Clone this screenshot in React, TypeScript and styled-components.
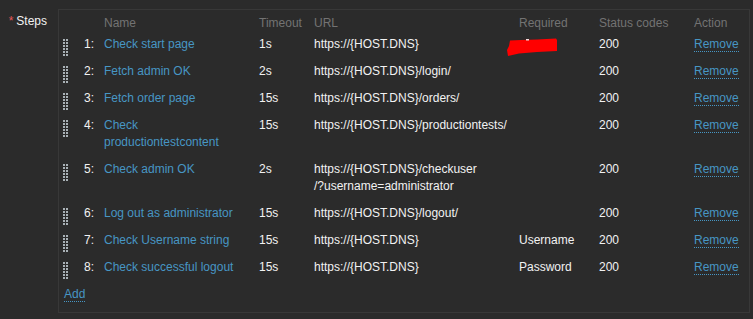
import React from 'react';
import styled, { createGlobalStyle } from 'styled-components';

const GlobalStyle = createGlobalStyle`
  body {
    margin: 0;
    background: #2b2b2b;
    font-family: "Liberation Sans", Arial, sans-serif;
    font-size: 12px;
    color: #f2f2f2;
  }
`;

const COLS = '20px 20px 155px 55px 205px 80px 95px 1fr';

const FormRow = styled.div`
  display: grid;
  grid-template-columns: 50px 692px;
  column-gap: 8px;
  padding-top: 9px;
`;

const Label = styled.div`
  text-align: right;
  padding: 4px 3px 0 0;
  line-height: 17px;
`;

const Asterisk = styled.span`
  color: #e45959;
  margin-right: 3px;
`;

const Box = styled.div`
  border: 1px solid #383838;
  height: 302px;
`;

const Row = styled.div<{ $head?: boolean }>`
  display: grid;
  grid-template-columns: ${COLS};
  color: ${(p) => (p.$head ? '#737373' : '#f2f2f2')};
`;

const Cell = styled.div<{ $head?: boolean; $right?: boolean }>`
  position: relative;
  padding: ${(p) => (p.$head ? '5px 5px 0' : '5px 5px')};
  line-height: ${(p) => (p.$head ? '16px' : '17px')};
  text-align: ${(p) => (p.$right ? 'right' : 'left')};
`;

const HandleCell = styled.div`
  padding: 8px 0 0 4px;
  line-height: 0;

  svg {
    display: block;
  }
`;

const Link = styled.a`
  color: #4796c4;
  text-decoration: none;
  cursor: pointer;
`;

const DottedLink = styled(Link)`
  border-bottom: 1px dotted #4796c4;
`;

const FootRow = styled.div`
  padding: 5px 5px;
  line-height: 17px;
`;

// red scribble that hides the value in the first row
const Redaction = styled.svg`
  position: absolute;
  left: -7px;
  top: 7px;
`;

const DragHandle = () => (
  <svg width="5" height="18" viewBox="0 0 5 18">
    {[0, 3, 6, 9, 12, 15].map((y) =>
      [0, 3].map((x) => (
        <rect key={`${x}-${y}`} x={x} y={y} width="2" height="2" fill="#a9b1b6" />
      ))
    )}
  </svg>
);

type Step = {
  name: string;
  timeout: string;
  url: string[];
  required?: string;
  redacted?: boolean;
};

const steps: Step[] = [
  { name: 'Check start page', timeout: '1s', url: ['https://{HOST.DNS}'], redacted: true },
  { name: 'Fetch admin OK', timeout: '2s', url: ['https://{HOST.DNS}/login/'] },
  { name: 'Fetch order page', timeout: '15s', url: ['https://{HOST.DNS}/orders/'] },
  { name: 'Check productiontestcontent', timeout: '15s', url: ['https://{HOST.DNS}/productiontests/'] },
  {
    name: 'Check admin OK',
    timeout: '2s',
    url: ['https://{HOST.DNS}/checkuser', '/?username=administrator'],
  },
  { name: 'Log out as administrator', timeout: '15s', url: ['https://{HOST.DNS}/logout/'] },
  { name: 'Check Username string', timeout: '15s', url: ['https://{HOST.DNS}'], required: 'Username' },
  { name: 'Check successful logout', timeout: '15s', url: ['https://{HOST.DNS}'], required: 'Password' },
];

export default function App() {
  return (
    <>
      <GlobalStyle />
      <FormRow>
        <Label>
          <Asterisk>*</Asterisk>Steps
        </Label>
        <Box>
          <Row $head>
            <Cell $head />
            <Cell $head />
            <Cell $head>Name</Cell>
            <Cell $head>Timeout</Cell>
            <Cell $head>URL</Cell>
            <Cell $head>Required</Cell>
            <Cell $head>Status codes</Cell>
            <Cell $head>Action</Cell>
          </Row>
          {steps.map((s, i) => (
            <Row key={i}>
              <HandleCell>
                <DragHandle />
              </HandleCell>
              <Cell $right>{i + 1}:</Cell>
              <Cell>
                <Link>{s.name}</Link>
              </Cell>
              <Cell>{s.timeout}</Cell>
              <Cell>
                {s.url.map((u, j) => (
                  <div key={j}>{u}</div>
                ))}
              </Cell>
              <Cell>
                {s.required}
                {s.redacted && (
                  <Redaction width="52" height="19" viewBox="0 0 52 19">
                    <path d="M3 2.5 L14 2 L30 1.5 L49 0.5 L50 2 L50 13 L30 14 L12 15.5 L1 18 L0 12 L2 8 Z" fill="#ff0000" />
                    <rect x="19" y="1" width="3" height="1.5" fill="#f2dede" />
                  </Redaction>
                )}
              </Cell>
              <Cell>200</Cell>
              <Cell>
                <DottedLink>Remove</DottedLink>
              </Cell>
            </Row>
          ))}
          <FootRow>
            <DottedLink>Add</DottedLink>
          </FootRow>
        </Box>
      </FormRow>
    </>
  );
}
